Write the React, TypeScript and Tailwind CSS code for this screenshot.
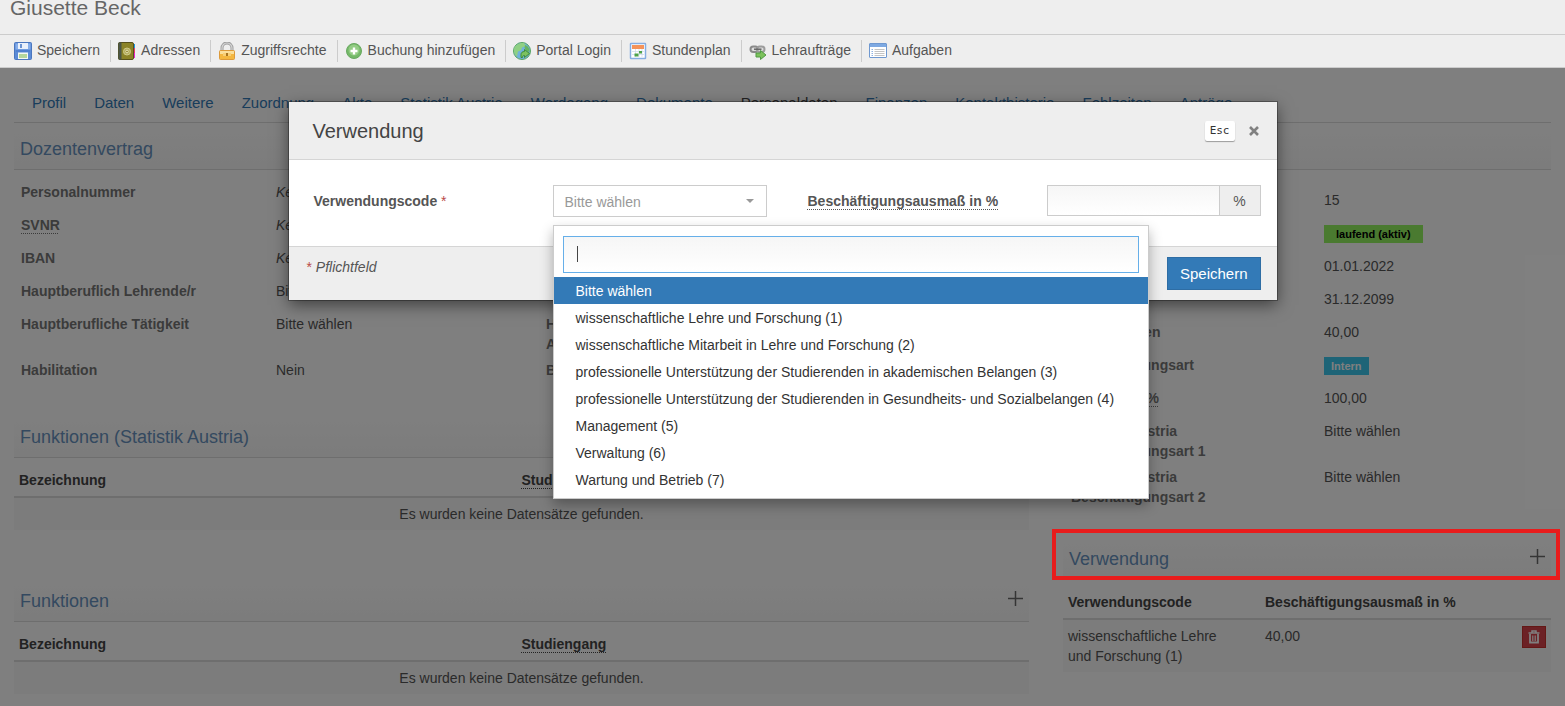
import { useState } from 'react'
import type { ReactNode } from 'react'

const SaveIcon = () => (
  <svg viewBox="0 0 18 18" className="size-[18px] shrink-0" aria-hidden="true">
    <rect x="0.5" y="0.5" width="17" height="17" rx="1" fill="#5b8bd6" stroke="#4a76be" />
    <rect x="1.5" y="1.5" width="15" height="6" fill="#86aeea" />
    <rect x="4" y="1" width="10" height="6" fill="#eaf1fb" />
    <rect x="6" y="2" width="2" height="4" fill="#6d94d2" />
    <rect x="2" y="8" width="14" height="2" fill="#4f80cf" />
    <rect x="4" y="10.5" width="10" height="6.5" fill="#f4f8f2" />
    <rect x="5" y="12" width="8" height="4" fill="#b4d69c" />
  </svg>
)

const AddressIcon = () => (
  <svg viewBox="0 0 18 18" className="size-[18px] shrink-0" aria-hidden="true">
    <rect x="14" y="2" width="3" height="4" fill="#1b9be8" />
    <rect x="14" y="6" width="3" height="5" fill="#e63a6e" />
    <rect x="14" y="11" width="3" height="5" fill="#ee1fd0" />
    <rect x="0.5" y="0.5" width="15" height="17" rx="1.5" fill="#8b8327" stroke="#57511c" />
    <rect x="0.5" y="0.5" width="3" height="17" fill="#4b5647" />
    <circle cx="9" cy="9.5" r="3.5" fill="#b5ae5d" stroke="#cfca8a" />
    <circle cx="9" cy="9.5" r="1.3" fill="#8b8327" stroke="#ece9c4" strokeWidth="0.8" />
  </svg>
)

const LockIcon = () => (
  <svg viewBox="0 0 18 18" className="size-[18px] shrink-0" aria-hidden="true">
    <path d="M4 9V6a5 5 0 0 1 10 0v3" fill="none" stroke="#9c9c9c" strokeWidth="3" />
    <path d="M4 9V6a5 5 0 0 1 10 0v3" fill="none" stroke="#d4d4d4" strokeWidth="1.2" />
    <rect x="1.5" y="8.5" width="15" height="9" rx="1" fill="#f4b740" stroke="#dd9a3a" />
    <rect x="2" y="9" width="14" height="3" fill="#fbdf9b" />
    <rect x="5" y="11" width="8" height="3" fill="#f8cf76" />
    <rect x="8" y="11" width="2" height="3" fill="#a8741e" />
  </svg>
)

const AddIcon = () => (
  <svg viewBox="0 0 18 18" className="size-[18px] shrink-0" aria-hidden="true">
    <circle cx="9" cy="9" r="7.5" fill="#74b868" stroke="#69a960" />
    <circle cx="9" cy="8" r="5.5" fill="#93cc84" />
    <path d="M9 5.5v7M5.5 9h7" stroke="#fff" strokeWidth="2.4" />
  </svg>
)

const PortalIcon = () => (
  <svg viewBox="0 0 18 18" className="size-[18px] shrink-0" aria-hidden="true">
    <circle cx="9" cy="9" r="8.5" fill="#6fb1dc" stroke="#58a560" />
    <path d="M1 7c1-4 5-6.500 10-6l2 3-4 1.500-1 3-3 1-1 5C1.500 13 0.500 10 1 7z" fill="#8fd083" />
    <path d="M12 3c3 1 5 4 4.500 7l-3-1-2-3z" fill="#66b45e" />
    <path d="M8 12.500c0-2 1.500-3 3.500-3V7.500l5 4-5 4v-2c-1.500 0-2 0.500-2 2H8z" fill="#7cc25f" stroke="#3f8c38" />
  </svg>
)

const ScheduleIcon = () => (
  <svg viewBox="0 0 18 18" className="size-[18px] shrink-0" aria-hidden="true">
    <rect x="1.500" y="1.500" width="15" height="15" rx="0.500" fill="#fff" stroke="#86aee2" strokeWidth="1.500" />
    <rect x="3" y="3" width="12" height="4" fill="#f4935a" />
    <path d="M3 9.500h12M3 12.500h12M6.500 7v8M10 7v8M13 7v8" stroke="#ccd9ea" strokeWidth="0.700" />
    <rect x="10" y="9" width="3" height="2.500" fill="#4fa34a" />
    <rect x="5.500" y="11.500" width="4" height="3" fill="#4fa34a" />
  </svg>
)

const LinkIcon = () => (
  <svg viewBox="0 0 18 18" className="size-[18px] shrink-0" aria-hidden="true">
    <rect x="1.500" y="4.500" width="7.500" height="5.500" rx="2.700" fill="#ddd" stroke="#8a8a8a" strokeWidth="2" />
    <rect x="8" y="4.500" width="7.500" height="5.500" rx="2.700" fill="#ddd" stroke="#9c9c9c" strokeWidth="2" />
    <path d="M5 7.200h7.500" stroke="#666" strokeWidth="1.500" />
    <path d="M7 11h4.500V8.500l5.500 4.500-5.500 4.500V15H7z" fill="#7cc25b" stroke="#519a45" />
  </svg>
)

const TasksIcon = () => (
  <svg viewBox="0 0 18 18" className="size-[18px] shrink-0" aria-hidden="true">
    <rect x="0.500" y="1.500" width="17" height="14" rx="0.500" fill="#fff" stroke="#6f98d0" />
    <rect x="1" y="2" width="16" height="3" fill="#7ea9e2" />
    <path d="M2.500 7.500h1.500M2.500 9.500h1.500M2.500 11.500h1.500M2.500 13.500h1.500" stroke="#8fb2e2" />
    <path d="M5.500 7.500h10M5.500 9.500h10M5.500 11.500h10M5.500 13.500h10" stroke="#c4c4c4" />
  </svg>
)

const PlusIcon = () => (
  <svg viewBox="0 0 15 15" className="size-[15px]" aria-hidden="true">
    <path d="M7.500 0v15M0 7.500h15" stroke="#6b6b6b" strokeWidth="1.500" />
  </svg>
)

const TrashIcon = () => (
  <svg viewBox="0 0 12 14" className="h-[14px] w-3" aria-hidden="true">
    <path d="M4 2.500V1h4v1.500M0.500 3h11" fill="none" stroke="#fff" strokeWidth="1.500" />
    <path d="M2 4v8.500h8V4" fill="none" stroke="#fff" strokeWidth="1.800" />
    <path d="M4.500 5.500v5.500M6 5.500v5.500M7.500 5.500v5.500" stroke="#fff" strokeWidth="0.800" />
  </svg>
)

const toolbar = [
  { label: 'Speichern', icon: SaveIcon },
  { label: 'Adressen', icon: AddressIcon },
  { label: 'Zugriffsrechte', icon: LockIcon },
  { label: 'Buchung hinzufügen', icon: AddIcon },
  { label: 'Portal Login', icon: PortalIcon },
  { label: 'Stundenplan', icon: ScheduleIcon },
  { label: 'Lehraufträge', icon: LinkIcon },
  { label: 'Aufgaben', icon: TasksIcon },
]

const tabs = [
  'Profil',
  'Daten',
  'Weitere',
  'Zuordnung',
  'Akte',
  'Statistik Austria',
  'Werdegang',
  'Dokumente',
  'Personaldaten',
  'Finanzen',
  'Kontakthistorie',
  'Fehlzeiten',
  'Anträge',
]

const usageCodes = [
  'Bitte wählen',
  'wissenschaftliche Lehre und Forschung (1)',
  'wissenschaftliche Mitarbeit in Lehre und Forschung (2)',
  'professionelle Unterstützung der Studierenden in akademischen Belangen (3)',
  'professionelle Unterstützung der Studierenden in Gesundheits- und Sozialbelangen (4)',
  'Management (5)',
  'Verwaltung (6)',
  'Wartung und Betrieb (7)',
]

const Abbr = ({ children }: { children: ReactNode }) => (
  <span className="underline decoration-dotted decoration-1 underline-offset-3">{children}</span>
)

const empty = <i>Keine Angabe</i>

const contractFields: { label: ReactNode; value: ReactNode; extra?: ReactNode }[] = [
  { label: 'Personalnummer', value: empty },
  { label: <Abbr>SVNR</Abbr>, value: empty },
  { label: 'IBAN', value: empty },
  { label: 'Hauptberuflich Lehrende/r', value: 'Bitte wählen' },
  { label: 'Hauptberufliche Tätigkeit', value: 'Bitte wählen', extra: <>Höchste<br />Ausbildung</> },
  { label: 'Habilitation', value: 'Nein', extra: 'Befristung' },
]

const employmentFields: { label: ReactNode; value: ReactNode }[] = [
  { label: 'Nummer', value: '15' },
  {
    label: 'Status',
    value: <span className="bg-[#94f560] px-3 py-[3px] text-[11px] font-bold text-black">laufend (aktiv)</span>,
  },
  { label: 'Beginn', value: '01.01.2022' },
  { label: 'Ende', value: '31.12.2099' },
  { label: 'Plan Stunden', value: '40,00' },
  {
    label: 'Beschäftigungsart',
    value: <span className="bg-[#3cc8ee] px-[7px] py-[3px] text-[11px] font-bold text-white">Intern</span>,
  },
  { label: <Abbr>Ausmaß in %</Abbr>, value: '100,00' },
  { label: <>Statistik Austria<br />Beschäftigungsart 1</>, value: 'Bitte wählen' },
  { label: <>Statistik Austria<br />Beschäftigungsart 2</>, value: 'Bitte wählen' },
]

function SectionHeading({ title, onAdd, marked }: { title: string; onAdd?: () => void; marked?: boolean }) {
  return (
    <div className="relative flex h-[42px] items-center justify-between border-b border-[#ddd] bg-linear-to-b from-white to-[#f8f8f8] px-1.5">
      <h2 className="text-lg text-[#6893c0]">{title}</h2>
      {onAdd && (
        <button type="button" aria-label={`${title} hinzufügen`} onClick={onAdd} className="pb-1">
          <PlusIcon />
        </button>
      )}
      {marked && (
        <div className="pointer-events-none absolute -top-[9px] -right-[9px] -bottom-px -left-[11px] z-20 border-4 border-[#e81c1c]" />
      )}
    </div>
  )
}

function EmptyTable() {
  return (
    <table className="w-full table-fixed border-separate border-spacing-0">
      <thead>
        <tr className="text-left text-[#444]">
          <th className="border-b-2 border-[#ddd] px-[5px] pt-3 pb-1.5">Bezeichnung</th>
          <th className="border-b-2 border-[#ddd] pt-3 pb-1.5"><Abbr>Studiengang</Abbr></th>
        </tr>
      </thead>
      <tbody>
        <tr className="bg-[#f8f8f8]">
          <td colSpan={2} className="py-1.5 text-center">Es wurden keine Datensätze gefunden.</td>
        </tr>
      </tbody>
    </table>
  )
}

function UsageDialog({ onClose }: { onClose: () => void }) {
  const [code, setCode] = useState(usageCodes[0])
  const [search, setSearch] = useState('')

  return (
    <div role="dialog" aria-labelledby="dialog-title" className="w-full max-w-[988px] bg-white shadow-[0_0_0_1px_rgba(0,0,0,0.3),0_5px_15px_rgba(0,0,0,0.5)]">
      {/* Header */}
      <div className="flex h-[58px] items-center justify-between border-b border-[#d5d5d5] bg-[#eee] pr-[18px] pl-6">
        <h2 id="dialog-title" className="text-xl text-[#444]">Verwendung</h2>
        <div className="flex items-center gap-3.5">
          <kbd className="rounded-xs bg-white px-[5px] font-[DejaVu_Sans_Mono,monospace] text-[11px] leading-5 text-[#333] shadow-[0_1px_1px_rgba(0,0,0,0.35)]">Esc</kbd>
          <button type="button" aria-label="Schließen" onClick={onClose}>
            <svg viewBox="0 0 10 10" className="size-[10px]" aria-hidden="true">
              <path d="M1 1l8 8M9 1l-8 8" stroke="#808080" strokeWidth="2.600" />
            </svg>
          </button>
        </div>
      </div>

      {/* Form */}
      <div className="grid grid-cols-4 items-start gap-x-[33px] pt-[25px] pr-4 pb-[29px] pl-[17px]">
        <label htmlFor="usage-code" className="pt-1.5 pl-2 font-bold whitespace-nowrap">
          Verwendungscode <span className="font-normal text-[#b94a48]">*</span>
        </label>
        <div className="relative">
          <select
            id="usage-code"
            value={code}
            onChange={(e) => setCode(e.target.value)}
            className="h-8 w-full appearance-none border border-[#ccc] bg-white pt-px pr-8 pl-[11px] text-[#999]"
          >
            {usageCodes.map((name) => (
              <option key={name}>{name}</option>
            ))}
          </select>
          <svg viewBox="0 0 8 4" className="pointer-events-none absolute top-[14px] right-[13px] h-1 w-2" aria-hidden="true">
            <path d="M0 0h8L4 4z" fill="#999" />
          </svg>

          {/* Option list */}
          <div className="absolute top-10 left-0 z-10 min-w-[596px] border border-[#ccc] bg-white pt-2.5 pb-[5px] shadow-[0_6px_12px_rgba(0,0,0,0.3)]">
            <div className="relative mx-[9px] mb-1">
              <input
                type="text"
                aria-label="Verwendungscode suchen"
                value={search}
                onChange={(e) => setSearch(e.target.value)}
                className="block h-[37px] w-full border border-[#66afe9] bg-linear-to-b from-[#f6f6f6] to-white px-3 outline-none"
              />
              {search === '' && <span className="pointer-events-none absolute top-2.5 left-3.5 h-4 w-px bg-[#444]" />}
            </div>
            <ul role="listbox" aria-label="Verwendungscode">
              {usageCodes
                .filter((name) => name.toLowerCase().includes(search.toLowerCase()))
                .map((name) => (
                  <li
                    key={name}
                    role="option"
                    aria-selected={name === code}
                    onClick={() => setCode(name)}
                    className={`h-[27px] cursor-pointer px-[22px] pt-1 leading-5 whitespace-nowrap ${
                      name === code ? 'bg-[#337ab7] text-white' : 'text-[#333]'
                    }`}
                  >
                    {name}
                  </li>
                ))}
            </ul>
          </div>
        </div>
        <label htmlFor="usage-percent" className="pt-1.5 pl-2 font-bold whitespace-nowrap">
          <Abbr>Beschäftigungsausmaß in %</Abbr>
        </label>
        <div className="flex h-[31px] border border-[#ccc]">
          <input id="usage-percent" type="text" className="w-full min-w-0 flex-1 bg-linear-to-b from-[#f6f6f6] to-white px-3" />
          <span className="flex w-[41px] items-center justify-center border-l border-[#ccc] bg-[#eee]">%</span>
        </div>
      </div>

      {/* Footer */}
      <div className="flex items-start justify-between border-t border-[#d5d5d5] bg-[#eee] px-4 py-2.5">
        <p className="pl-0.5 italic">
          <span className="text-[#b94a48] not-italic">*</span> Pflichtfeld
        </p>
        <button type="button" className="h-[33px] border border-[#2e6da4] bg-[#337ab7] px-3 text-[15px] text-white">
          Speichern
        </button>
      </div>
    </div>
  )
}

export default function App() {
  const [dialogOpen, setDialogOpen] = useState(true)
  const openDialog = () => setDialogOpen(true)

  return (
    <div className="flex min-h-screen flex-col bg-white font-[Liberation_Sans,Arial,sans-serif] text-sm text-[#555]">
      {/* Header */}
      <header className="bg-[#eee]">
        <h1 className="h-[34px] px-2.5 text-[21px] leading-4 text-[#666]">Giusette Beck</h1>
        <div className="flex h-[34px] items-center border-y border-[#ccc] px-[7px]">
          {toolbar.map(({ label, icon: Icon }, index) => (
            <button
              key={label}
              type="button"
              className={`flex h-[22px] items-center gap-[5px] pr-2.5 pl-[7px] ${index > 0 ? 'border-l border-[#ccc]' : ''}`}
            >
              <Icon />
              <span className="pb-0.5">{label}</span>
            </button>
          ))}
        </div>
      </header>

      <main className="relative flex-1 px-3.5 pb-3">
        <nav className="flex h-[55px] items-center gap-[28px] overflow-hidden border-b border-[#ddd] px-[18px] pt-4 text-[15px]">
          {tabs.map((tab) => (
            <a
              key={tab}
              href="#"
              className={`whitespace-nowrap ${tab === 'Personaldaten' ? 'text-[#444]' : 'text-[#337ab7]'}`}
            >
              {tab}
            </a>
          ))}
        </nav>

        <div className="grid grid-cols-[1015fr_488fr] gap-[34px] pt-[5px]">
          {/* Left column */}
          <div>
            <SectionHeading title="Dozentenvertrag" />
            <div className="pt-3 pb-[23px]">
              {contractFields.map((field, index) => (
                <div key={index} className="grid min-h-[33px] grid-cols-[262fr_263fr_490fr] pb-1.5">
                  <div className="pl-[7px] font-bold text-[#777]">{field.label}</div>
                  <div>{field.value}</div>
                  <div className="pl-[7px] font-bold text-[#777]">{field.extra}</div>
                </div>
              ))}
            </div>
            <SectionHeading title="Funktionen (Statistik Austria)" />
            <EmptyTable />
            <div className="pt-[50px]">
              <SectionHeading title="Funktionen" onAdd={openDialog} />
              <EmptyTable />
            </div>
          </div>

          {/* Right column */}
          <div>
            <SectionHeading title="Vertrag" />
            <div className="pt-5 pb-[25px]">
              {employmentFields.map((field, index) => (
                <div key={index} className="grid min-h-[33px] grid-cols-[261fr_227fr] pb-1.5">
                  <div className="pl-2 font-bold text-[#777]">{field.label}</div>
                  <div>{field.value}</div>
                </div>
              ))}
            </div>
            <SectionHeading title="Verwendung" onAdd={openDialog} marked />
            <table className="w-full table-fixed border-separate border-spacing-0">
              <thead>
                <tr className="text-left text-[#444]">
                  <th className="w-[197px] border-b-2 border-[#ddd] px-[5px] pt-3 pb-1.5">Verwendungscode</th>
                  <th className="border-b-2 border-[#ddd] px-[5px] pt-3 pb-1.5">Beschäftigungsausmaß in %</th>
                  <th className="w-10 border-b-2 border-[#ddd]" aria-label="Aktionen"></th>
                </tr>
              </thead>
              <tbody>
                <tr className="bg-[#f8f8f8] align-top">
                  <td className="py-1.5 pr-8 pl-[5px]">wissenschaftliche Lehre und Forschung (1)</td>
                  <td className="px-[5px] py-1.5">40,00</td>
                  <td className="py-1.5 pr-[5px] text-right">
                    <button
                      type="button"
                      aria-label="Löschen"
                      className="inline-flex h-[22px] w-6 items-center justify-center border border-[#c9302c] bg-[#d9434a]"
                    >
                      <TrashIcon />
                    </button>
                  </td>
                </tr>
              </tbody>
            </table>
          </div>
        </div>

        {dialogOpen && (
          <>
            <div className="absolute inset-0 z-10 bg-black/50" />
            <div className="absolute inset-x-0 top-[34px] z-30 flex justify-center">
              <UsageDialog onClose={() => setDialogOpen(false)} />
            </div>
          </>
        )}
      </main>
    </div>
  )
}
